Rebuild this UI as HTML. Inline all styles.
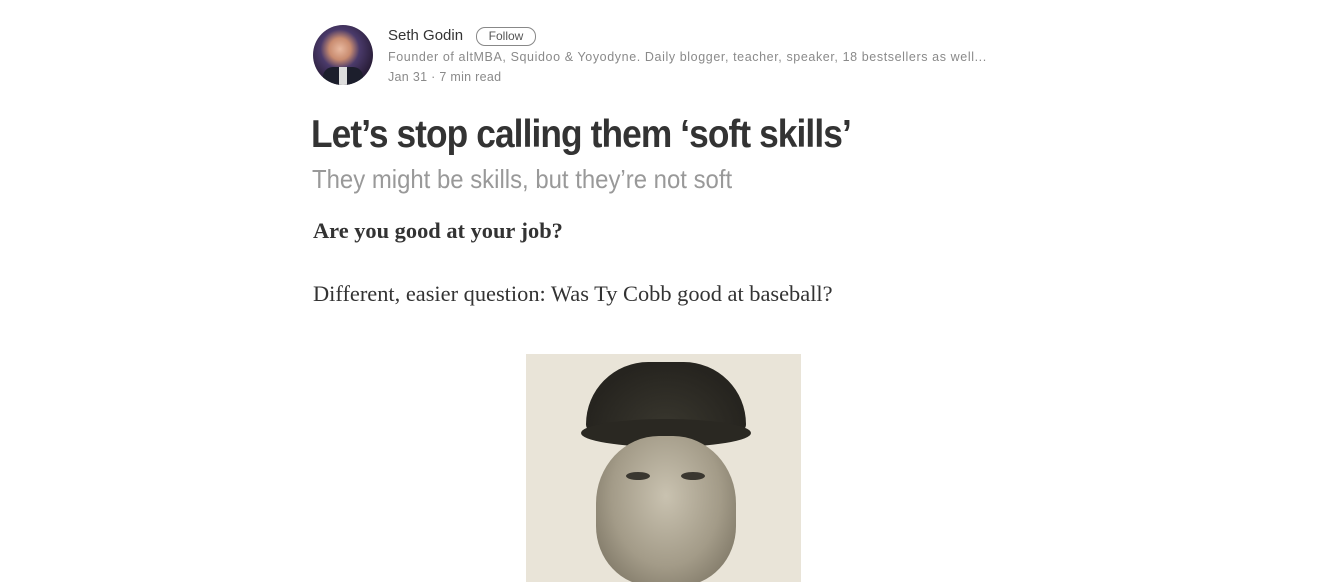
<!DOCTYPE html>
<html><head><style>
body{margin:0;width:1334px;height:582px;overflow:hidden;background:#fff;font-family:"Liberation Sans",sans-serif;position:relative}
.a{position:absolute;white-space:nowrap}
</style></head><body>
<div class="a" style="left:313px;top:25px;width:60px;height:60px;border-radius:50%;background:radial-gradient(circle at 45% 40%,#e8b9a0 0,#c98c70 22%,#4a3a6a 40%,#2a1e3a 70%,#140f1e 100%);overflow:hidden">
 <div style="position:absolute;left:10px;top:42px;width:40px;height:22px;background:#1c1e2c;border-radius:10px 10px 0 0"></div>
 <div style="position:absolute;left:26px;top:42px;width:8px;height:18px;background:#ddd"></div>
</div>
<div class="a" style="left:388px;top:27px;font-size:15px;color:#333">Seth Godin</div>
<div class="a" style="left:476px;top:27px;width:58px;height:17px;border:1px solid #888;border-radius:9px;font-size:12px;color:#555;text-align:center;line-height:17px">Follow</div>
<div class="a" style="left:388px;top:50px;font-size:12.5px;color:#8a8a8a;letter-spacing:0.6px">Founder of altMBA, Squidoo &amp; Yoyodyne. Daily blogger, teacher, speaker, 18 bestsellers as well...</div>
<div class="a" style="left:388px;top:70px;font-size:12.5px;color:#8a8a8a;letter-spacing:0.3px">Jan 31 · 7 min read</div>
<div class="a" style="left:311px;top:113px;font-size:39px;font-weight:bold;color:#333;letter-spacing:-1px;transform:scaleX(0.905);transform-origin:left">Let’s stop calling them ‘soft skills’</div>
<div class="a" style="left:312px;top:164px;font-size:26px;color:#999;transform:scaleX(0.92);transform-origin:left">They might be skills, but they’re not soft</div>
<div class="a" style="left:313px;top:218px;font-size:22.4px;font-weight:bold;color:#333;font-family:'Liberation Serif',serif">Are you good at your job?</div>
<div class="a" style="left:313px;top:281px;font-size:22.4px;color:#333;font-family:'Liberation Serif',serif">Different, easier question: Was Ty Cobb good at baseball?</div>
<div class="a" style="left:526px;top:354px;width:275px;height:228px;background:#e9e4d8;overflow:hidden">
 <div style="position:absolute;left:60px;top:8px;width:160px;height:70px;background:radial-gradient(ellipse at 50% 100%,#3a382f 0,#26241f 70%);border-radius:80px 80px 10px 10px"></div>
 <div style="position:absolute;left:55px;top:65px;width:170px;height:28px;background:#2a2822;border-radius:50%"></div>
 <div style="position:absolute;left:70px;top:82px;width:140px;height:150px;background:radial-gradient(ellipse at 50% 40%,#c9c2b0 0,#a39b88 55%,#6e6757 100%);border-radius:45% 45% 40% 40%"></div>
 <div style="position:absolute;left:100px;top:118px;width:24px;height:8px;background:#3a3730;border-radius:50%"></div>
 <div style="position:absolute;left:155px;top:118px;width:24px;height:8px;background:#3a3730;border-radius:50%"></div>
</div>
</body></html>
